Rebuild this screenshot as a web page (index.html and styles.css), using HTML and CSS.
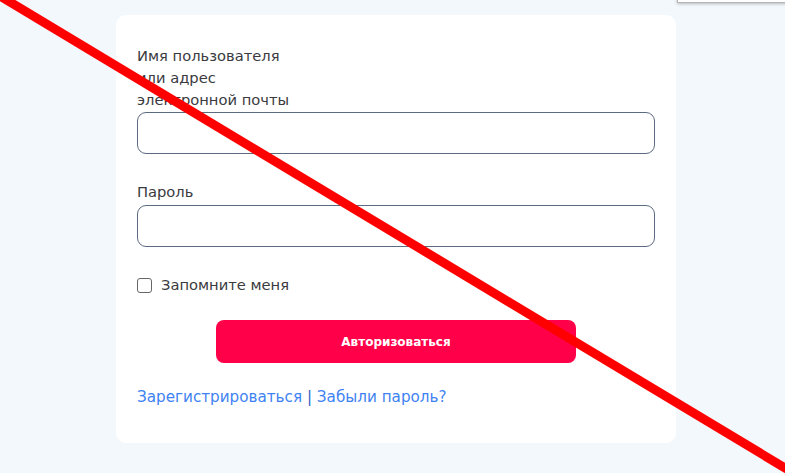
FILE: index.html
```html
<!DOCTYPE html>
<html lang="ru">
<head>
    <meta charset="UTF-8">
    <meta name="viewport" content="width=device-width, initial-scale=1.0">
    <title>Вход</title>
    <link rel="stylesheet" href="styles.css">
</head>
<body>
    <div class="popup-edge"></div>

    <div class="page">
        <form class="login-card">
            <div class="field">
                <label class="field-label" for="user">Имя пользователя или адрес электронной почты</label>
                <input class="field-input" type="text" id="user">
            </div>

            <div class="field">
                <label class="field-label" for="pass">Пароль</label>
                <input class="field-input" type="password" id="pass">
            </div>

            <label class="remember">
                <span class="checkbox"></span>
                Запомните меня
            </label>

            <button type="button" class="submit-btn">Авторизоваться</button>

            <p class="links">
                <a href="#">Зарегистрироваться</a> <span class="sep">|</span> <a href="#">Забыли пароль?</a>
            </p>
        </form>
    </div>

    <!-- red cross-out over the whole shot -->
    <svg class="strike" width="785" height="473" viewBox="0 0 785 473">
        <line x1="-10" y1="-10" x2="800" y2="477" stroke="#ff0000" stroke-width="9"/>
    </svg>
</body>
</html>
```

FILE: styles.css
```css
body {
    margin: 0;
    background-color: #f3f8fc;
    font-family: "DejaVu Sans", Arial, sans-serif;
    color: #3a3a40;
    overflow: hidden;
}

.page {
    padding: 15px 0 0 116px;
}

.login-card {
    width: 518px;
    background-color: #fff;
    border-radius: 10px;
    padding: 30px 21px 35px;
}

.field {
    display: flex;
    flex-direction: column;
    margin-bottom: 27px;
}

.field-label {
    font-size: 14.7px;
    line-height: 22px;
    max-width: 168px;
    margin-bottom: 1px;
}

.field + .field .field-label {
    margin-bottom: 2px;
}

.field-input {
    box-sizing: border-box;
    height: 42px;
    border: 1px solid #5b6b80;
    border-radius: 9px;
    background: #fff;
    font-size: 15px;
    padding: 0 12px;
}

.remember {
    display: flex;
    align-items: center;
    gap: 9px;
    font-size: 14.7px;
    line-height: 22px;
}

.checkbox {
    width: 13px;
    height: 13px;
    border: 1px solid #666;
    border-radius: 3px;
}

.submit-btn {
    display: block;
    width: 360px;
    height: 43px;
    margin: 24px auto 0;
    border: none;
    border-radius: 8px;
    background-color: #ff0049;
    color: #fff;
    font-family: inherit;
    font-size: 12px;
    font-weight: bold;
}

.links {
    margin: 23px 0 0;
    font-size: 15.2px;
    line-height: 22px;
}

.links a {
    color: #3f82f2;
    text-decoration: none;
}

.sep {
    color: #2a63c4;
}

.popup-edge {
    position: absolute;
    top: -40px;
    right: -2px;
    width: 108px;
    height: 41px;
    background: #fff;
    border: 1px solid #b5b5b5;
    box-shadow: 0 1px 3px rgba(0, 0, 0, 0.25);
}

.strike {
    position: fixed;
    top: 0;
    left: 0;
    pointer-events: none;
}
```
